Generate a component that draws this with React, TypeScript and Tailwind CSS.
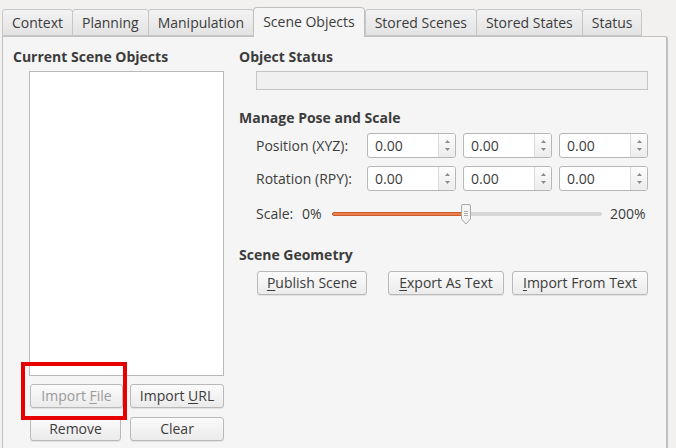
import React from "react";

const tabs = [
  "Context",
  "Planning",
  "Manipulation",
  "Scene Objects",
  "Stored Scenes",
  "Stored States",
  "Status",
];

const Btn = ({
  pre,
  mn,
  post,
  className,
  disabled,
}: {
  pre: string;
  mn?: string;
  post?: string;
  className: string;
  disabled?: boolean;
}) => (
  <div
    className={`flex h-[24px] items-center justify-center rounded-[3px] border border-[#b9b9b9] bg-gradient-to-b from-[#fbfbfb] to-[#ebebeb] leading-[18px] shadow-[0_1px_0_#e2e2e2] ${
      disabled ? "text-[#9b9b9b]" : "text-[#3c3c3c]"
    } ${className}`}
  >
    <span>
      {pre}
      {mn && <span className="underline underline-offset-2">{mn}</span>}
      {post}
    </span>
  </div>
);

const Spin = () => (
  <div className="flex h-[25px] w-[89px] overflow-hidden rounded-[3px] border border-[#b7b7b7] bg-white">
    <div className="flex flex-1 items-center pl-[7px] text-[#3c3c3c]">0.00</div>
    <div className="flex w-[17px] flex-col items-center justify-center gap-[5px] border-l border-[#dcdcdc] bg-gradient-to-b from-[#fdfdfd] to-[#ececec]">
      <svg width="5" height="3" viewBox="0 0 5 3">
        <path d="M0 3 L2.5 0 L5 3 Z" fill="#8a8a8a" />
      </svg>
      <svg width="5" height="3" viewBox="0 0 5 3">
        <path d="M0 0 L2.5 3 L5 0 Z" fill="#8a8a8a" />
      </svg>
    </div>
  </div>
);

export default function App() {
  return (
    <div className="relative h-[448px] w-[676px] overflow-hidden bg-[#f2f1f0] font-['Open_Sans',sans-serif] text-[14px] leading-[18px] text-[#3c3c3c]">
      {/* tab bar */}
      <div className="flex h-[36px] items-end pl-[2px]">
        {tabs.map((t) =>
          t === "Scene Objects" ? (
            <div
              key={t}
              className="relative z-10 -mb-px flex h-[30px] items-center rounded-t-[4px] border border-b-0 border-[#c0c0c0] bg-[#f5f5f5] px-[9px] pb-[2px]"
            >
              {t}
            </div>
          ) : (
            <div
              key={t}
              className="-mr-px flex h-[27px] items-center rounded-t-[3px] border border-[#c6c6c6] bg-gradient-to-b from-[#f3f3f3] to-[#e3e3e3] px-[9px]"
            >
              {t}
            </div>
          )
        )}
      </div>

      {/* panel */}
      <div className="ml-[2px] flex h-[420px] w-[666px] rounded-tr-[3px] border border-r-2 border-[#c0c0c0] bg-[#f5f5f5] pl-[10px] pt-[11px]">
        <div className="flex w-[224px] flex-col">
          <div className="h-[18px] font-bold">Current Scene Objects</div>
          <div className="ml-[16px] mt-[5px] h-[305px] w-[195px] border border-[#b9b9b9] bg-white" />
          <div className="ml-[17px] mt-[8px] flex gap-[7px]">
            <Btn pre="Import " mn="F" post="ile" className="w-[93px]" disabled />
            <Btn pre="Import " mn="U" post="RL" className="w-[94px]" />
          </div>
          <div className="ml-[17px] mt-[9px] flex gap-[9px]">
            <Btn pre="Remove" className="w-[91px]" />
            <Btn pre="Clear" className="w-[94px]" />
          </div>
        </div>

        <div className="ml-[2px] flex flex-col">
          <div className="h-[18px] font-bold">Object Status</div>
          <div className="ml-[17px] mt-[5px] h-[19px] w-[392px] border border-[#c4c4c4] bg-[#f0f0f0]" />

          <div className="mt-[19px] h-[18px] font-bold">Manage Pose and Scale</div>
          <div className="ml-[17px] mt-[6px] flex items-center">
            <div className="w-[111px]">Position (XYZ):</div>
            <div className="flex gap-[7px]">
              <Spin />
              <Spin />
              <Spin />
            </div>
          </div>
          <div className="ml-[17px] mt-[8px] flex items-center">
            <div className="w-[111px]">Rotation (RPY):</div>
            <div className="flex gap-[7px]">
              <Spin />
              <Spin />
              <Spin />
            </div>
          </div>
          <div className="ml-[17px] mt-[11px] flex h-[24px] items-center">
            <div className="w-[46px]">Scale:</div>
            <div className="w-[30px]">0%</div>
            <div className="relative h-[20px] w-[270px]">
              <div className="absolute left-0 right-0 top-[8px] h-[4px] rounded-full bg-[#d6d6d6]" />
              <div className="absolute left-0 top-[8px] h-[4px] w-[134px] rounded-full border border-[#c85d2b] bg-[#ee8050]" />
              <svg
                className="absolute left-[128px] top-0"
                width="12"
                height="21"
                viewBox="0 0 12 21"
              >
                <path
                  d="M1.5 2 Q1.5 0.5 3 0.5 L9 0.5 Q10.5 0.5 10.5 2 L10.5 15 L6 20 L1.5 15 Z"
                  fill="#f4f4f4"
                  stroke="#a8a8a8"
                />
                <path d="M4 7.5 H8 M4 9.5 H8 M4 11.5 H8" stroke="#9a9a9a" strokeWidth="0.8" />
              </svg>
            </div>
            <div className="ml-[8px]">200%</div>
          </div>

          <div className="mt-[20px] h-[18px] font-bold">Scene Geometry</div>
          <div className="ml-[18px] mt-[7px] flex">
            <Btn pre="" mn="P" post="ublish Scene" className="w-[110px]" />
            <Btn pre="" mn="E" post="xport As Text" className="ml-[21px] w-[116px]" />
            <Btn pre="" mn="I" post="mport From Text" className="ml-[8px] w-[136px]" />
          </div>
        </div>
      </div>

      {/* highlight box */}
      <div className="absolute left-[21px] top-[362px] h-[58px] w-[106px] border-4 border-[#e60000]" />
    </div>
  );
}
